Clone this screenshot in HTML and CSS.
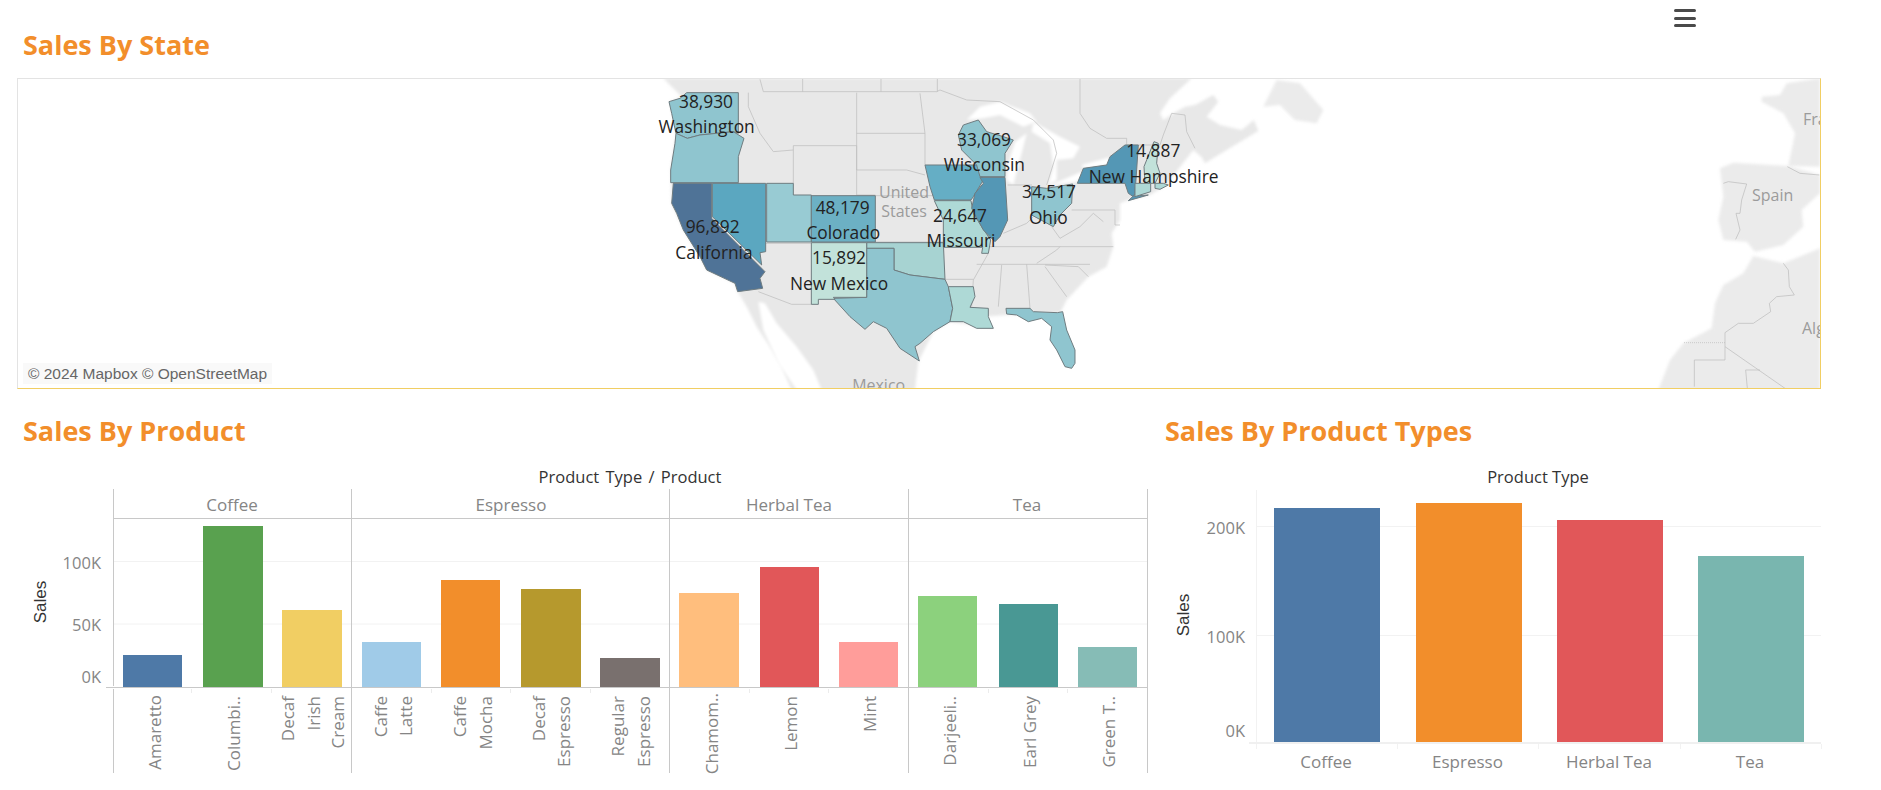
FILE: index.html
```html
<!DOCTYPE html>
<html lang="en">
<head>
<meta charset="utf-8">
<title>Sales Dashboard</title>
<link rel="stylesheet" href="styles.css">
</head>
<body>
<main class="dashboard">
  <header class="top">
    <h1 class="title">Sales By State</h1>
    <button class="menu" aria-label="Menu"><span></span><span></span><span></span></button>
  </header>

  <section class="map">
    <svg class="map-svg" viewBox="17 78 1804 311" width="1804" height="311">
      <g transform="translate(1400 0) scale(.33333)">
        <path class="land land-far" d="M1160,250L1260,235V500L1165,498L1185,400L1150,340L1085,305L1085,290L1140,285Z"/>
        <path class="land land-far" d="M960,505L1000,488L1165,498L1260,525V580L1205,630L1210,680L1150,735L1065,755L1040,725L970,720L955,660L970,590Z"/>
        <path class="land land-far" d="M1060,768L1150,790L1260,745V1170H775L810,1080L850,1030L935,985L945,910L970,855L1030,820Z"/>
        <path class="line" d="M970,550L985,545L1040,552L1025,600L1020,640L1008,640L1020,690L1007,718"/>
        <path class="line" d="M1162,500L1200,520L1258,525"/>
        <path class="line" d="M1150,790L1165,810L1168,860L1183,885L1130,890L1108,910L1112,935L1060,970L1015,970L975,998V1080H883V1160"/>
        <path class="line" d="M975,1040L1155,1165M1080,1110H1037L1042,1165"/>
        <path class="line dotted" d="M852,1028H975"/>
        <text class="place" x="1118" y="603" text-anchor="middle" font-size="48">Spain</text>
        <text class="place" x="1209" y="375" font-size="48">France</text>
        <text class="place" x="1206" y="1003" font-size="48">Algeria</text>
      </g>
      <g transform="translate(600 70) scale(.33333)">
        <path class="land" d="M130,25L190,25L215,50L245,80L210,95L228,190L212,300L215,400L250,480L300,560L320,600L405,640L413,665L440,710L470,770L510,830L545,890L575,960H945L955,875L1000,785L1050,755L1180,775L1150,740L1220,735L1380,730L1400,690L1465,620L1520,590L1540,530L1535,490L1560,450L1560,400L1585,390L1650,375L1700,345L1710,330L1780,240L1805,262L1815,280L1880,240L1975,183L1962,150L1925,180L1860,165L1820,140L1855,95L1840,75L1785,105L1755,110L1720,130L1690,150L1680,130L1710,85L1775,25Z"/>
        <path class="land land-far" d="M1990,110L2030,30L2100,40L2170,120L2150,160L2085,150L2040,105Z"/>
        <path class="water" d="M475,695L495,700L530,760L590,830L640,900L665,960H590L535,880L490,780Z"/>
        <path class="water" d="M1100,150L1140,110L1200,95L1290,130L1310,155L1270,170L1200,135L1150,145Z"/>
        <path class="water" d="M1245,215L1280,190L1265,250L1240,345L1220,330L1225,280Z"/>
        <path class="water" d="M1300,155L1380,200L1440,230L1420,265L1370,270L1370,330L1345,345L1360,290L1350,220L1295,185Z"/>
        <path class="water" d="M1345,345L1375,335L1445,305L1450,318L1430,335L1340,348Z"/>
        <path class="water" d="M1445,285L1530,262L1525,285L1450,295Z"/>
        <path class="line" d="M480,28L490,65H1010L1020,60L1100,90L1200,95L1300,150L1360,210L1370,250L1340,345"/>
        <path class="line" d="M1012,25V65M608,25V65M843,25V65M1440,25V130L1470,175L1520,205H1580V225H1680L1690,195L1715,130L1755,135L1760,185L1785,235"/>
        <path class="line" d="M445,68V110L480,190L520,245L580,240M580,227H770V375H826M580,227V340M770,68V300M770,190H975M770,300H920L975,315M960,70L975,190V285"/>
        <path class="line" d="M826,377H1000M497,520H634M634,703H575L475,665M826,516H1030"/>
        <path class="line" d="M1223,345H1296M1210,490L1280,460L1300,440M1170,530H1540M1310,580L1370,540L1380,530M1130,583H1470M1205,585L1195,710M1280,583L1290,715M1035,628H1120M1165,550L1120,630L1115,710M1335,585L1435,590L1465,620M1335,590L1400,680"/>
        <path class="line" d="M1415,420H1545V465H1560M1355,470L1380,505L1440,470L1480,430L1510,455"/>

        <path class="state s-mid" d="M260,68H415V190L400,185L300,195L262,205L228,190L215,130L207,95L240,85Z"/>
        <path class="state s-mid" d="M228,190L262,205L300,195L400,185L432,205L415,260V338H212V300L225,220Z"/>
        <path class="state s-dark" d="M220,340H335V445L495,605L480,625L488,655L413,665L405,640L320,600L300,560L250,480L230,430L215,400Z"/>
        <path class="state s-nevada" d="M337,340H497V545L480,548L485,585L337,440Z"/>
        <path class="state s-utah" d="M500,340H580V375H634V516H500Z"/>
        <path class="state s-colorado" d="M634,377H826V516H634Z"/>
        <path class="state s-oklahoma" d="M800,518H1030L1035,628L930,615L882,600V535H800Z"/>
        <path class="state s-mid" d="M800,535H882V600L930,615L1035,628L1045,650L1058,715L1050,755L1000,785L960,820L945,830L958,873L900,835L860,775L820,755L795,778L750,740L700,685L800,682Z"/>
        <path class="state s-light" d="M634,518H800V682H700L705,688H655V703H634Z"/>
        <path class="state s-pale" d="M1045,650H1120L1125,680L1110,712L1165,715V740L1180,775L1130,775L1090,755L1050,755L1058,715Z"/>
        <path class="state s-pale" d="M1003,392H1113L1120,430L1145,470L1172,510L1165,550H1145L1148,532H1030V450Z"/>
        <path class="state s-iowa" d="M975,285H1130L1150,330L1120,380L1113,390H1003L990,350Z"/>
        <path class="state s-deep" d="M1140,322H1215L1223,450L1200,500L1185,515L1150,480L1115,415L1125,370L1150,340Z"/>
        <path class="state s-mid" d="M1090,165L1135,150L1160,185L1210,200L1240,210L1215,250V320H1140L1130,285L1085,240L1075,195Z"/>
        <path class="state s-mid" d="M1295,350L1340,355L1418,342L1415,400L1380,435L1360,470L1295,435Z"/>
        <path class="state s-deep" d="M1432,340L1450,295L1520,285L1530,260L1575,225H1615L1610,300L1605,370L1600,380L1585,370L1575,340Z"/>
        <path class="state s-deep" d="M1585,392L1645,375L1600,378Z"/>
        <path class="state s-light" d="M1662,215L1675,220L1670,280L1680,310L1665,340H1635L1632,290Z"/>
        <path class="state s-pale" d="M1605,340H1652V365L1605,380Z"/>
        <path class="state s-pale" d="M1665,340H1690L1705,345L1680,358L1665,355Z"/>
        <path class="state s-mid" d="M1218,715H1290L1300,725L1372,728L1388,725L1400,780L1425,840V880L1415,895L1395,890L1370,840L1350,810L1355,770L1325,745L1285,755L1250,735L1220,732Z"/>

        <text class="place" x="912" y="383" text-anchor="middle" font-size="48">United</text>
        <text class="place" x="912" y="441" text-anchor="middle" font-size="48">States</text>
        <text class="place" x="836" y="962" text-anchor="middle" font-size="48">Mexico</text>

        <g class="labels">
          <text x="318" y="113">38,930</text><text x="320" y="190">Washington</text>
          <text x="338" y="489">96,892</text><text x="342" y="567">California</text>
          <text x="728" y="432">48,179</text><text x="730" y="508">Colorado</text>
          <text x="717" y="582">15,892</text><text x="717" y="660">New Mexico</text>
          <text x="1080" y="456">24,647</text><text x="1083" y="532">Missouri</text>
          <text x="1152" y="228">33,069</text><text x="1153" y="304">Wisconsin</text>
          <text x="1347" y="385">34,517</text><text x="1345" y="461">Ohio</text>
          <text x="1660" y="261">14,887</text><text x="1661" y="339">New Hampshire</text>
        </g>
      </g>
    </svg>
    <div class="attribution">© 2024 Mapbox © OpenStreetMap</div>
  </section>

  <div class="lower">
    <section class="panel panel-product">
      <h2 class="title">Sales By Product</h2>
      <svg class="chart" viewBox="0 470 1150 320" width="1150" height="320">
        <text class="axis-title spaced" x="630" y="483">Product Type / Product</text>
        <path class="grid" d="M113,561.5H1147M113,624H1147"/>
        <path class="frame" d="M113.5,489V686M351.5,489V773M669.5,489V773M908.5,489V773M1147.5,489V773M113,518.5H1147M113.5,689V773M106,687.5H1148"/>
        <path class="ticks" d="M191.5,689V693M271.5,689V693M431.5,689V693M510.5,689V693M590.5,689V693M749.5,689V693M828.5,689V693M988.5,689V693M1067.5,689V693"/>

        <text class="head" x="232" y="511">Coffee</text>
        <text class="head" x="511" y="511">Espresso</text>
        <text class="head" x="789" y="511">Herbal Tea</text>
        <text class="head" x="1027" y="511">Tea</text>

        <text class="val" x="101" y="569">100K</text>
        <text class="val" x="101" y="631">50K</text>
        <text class="val" x="101" y="683">0K</text>
        <text class="sales" transform="rotate(-90 40 602)" x="40" y="602">Sales</text>

        <rect class="c-blue" x="123" y="655" width="59" height="32"/>
        <rect class="c-green" x="203" y="526" width="60" height="161"/>
        <rect class="c-yellow" x="282" y="610" width="60" height="77"/>
        <rect class="c-sky" x="362" y="642" width="59" height="45"/>
        <rect class="c-orange" x="441" y="580" width="59" height="107"/>
        <rect class="c-olive" x="521" y="589" width="60" height="98"/>
        <rect class="c-grey" x="600" y="658" width="60" height="29"/>
        <rect class="c-peach" x="679" y="593" width="60" height="94"/>
        <rect class="c-red" x="760" y="567" width="59" height="120"/>
        <rect class="c-pink" x="839" y="642" width="59" height="45"/>
        <rect class="c-lime" x="918" y="596" width="59" height="91"/>
        <rect class="c-teal" x="999" y="604" width="59" height="83"/>
        <rect class="c-mint" x="1078" y="647" width="59" height="40"/>

        <g class="rot">
          <text transform="rotate(-90 154 695)" x="154" y="695">Amaretto</text>
          <text transform="rotate(-90 233.5 696)" x="233.5" y="696">Columbi..</text>
          <text transform="rotate(-90 287 696)" x="287" y="696">Decaf</text>
          <text transform="rotate(-90 313 696)" x="313" y="696">Irish</text>
          <text transform="rotate(-90 337.5 696)" x="337.5" y="696">Cream</text>
          <text transform="rotate(-90 380 696)" x="380" y="696">Caffe</text>
          <text transform="rotate(-90 405.7 696)" x="405.7" y="696">Latte</text>
          <text transform="rotate(-90 459 696)" x="459" y="696">Caffe</text>
          <text transform="rotate(-90 485 696)" x="485" y="696">Mocha</text>
          <text transform="rotate(-90 538.5 696)" x="538.5" y="696">Decaf</text>
          <text transform="rotate(-90 563.7 696)" x="563.7" y="696">Espresso</text>
          <text transform="rotate(-90 617 696)" x="617" y="696">Regular</text>
          <text transform="rotate(-90 643 696)" x="643" y="696">Espresso</text>
          <text transform="rotate(-90 711 693)" x="711" y="693">Chamom..</text>
          <text transform="rotate(-90 790 696)" x="790" y="696">Lemon</text>
          <text transform="rotate(-90 869 696)" x="869" y="696">Mint</text>
          <text transform="rotate(-90 949 696)" x="949" y="696">Darjeeli..</text>
          <text transform="rotate(-90 1029 696)" x="1029" y="696">Earl Grey</text>
          <text transform="rotate(-90 1108 696)" x="1108" y="696">Green T..</text>
        </g>
      </svg>
    </section>

    <section class="panel panel-types">
      <h2 class="title">Sales By Product Types</h2>
      <svg class="chart" viewBox="1150 470 731 320" width="731" height="320">
        <text class="axis-title" x="1538" y="483">Product Type</text>
        <path class="grid" d="M1256,526.5H1821M1256,635.5H1821M1256.5,490V742"/>
        <path class="baseline" d="M1249,743H1821"/>
        <path class="grid" d="M1256.5,744V749M1397.5,744V749M1538.5,744V749M1680.5,744V749M1821.5,744V749"/>
        <text class="val" x="1245" y="534">200K</text>
        <text class="val" x="1245" y="643">100K</text>
        <text class="val" x="1245" y="737">0K</text>
        <text class="sales" transform="rotate(-90 1183.5 615)" x="1183.5" y="615">Sales</text>
        <rect class="c-blue" x="1274" y="508" width="106" height="234"/>
        <rect class="c-orange" x="1416" y="503" width="106" height="239"/>
        <rect class="c-red" x="1557" y="520" width="106" height="222"/>
        <rect class="c-aqua" x="1698" y="556" width="106" height="186"/>
        <text class="head" x="1326" y="768">Coffee</text>
        <text class="head" x="1467.5" y="768">Espresso</text>
        <text class="head" x="1609" y="768">Herbal Tea</text>
        <text class="head" x="1750" y="768">Tea</text>
      </svg>
    </section>
  </div>
</main>
</body>
</html>
```
FILE: styles.css
```css
html, body {
  margin: 0;
  padding: 0;
  background: #fff;
}

.dashboard {
  width: 1881px;
  height: 790px;
  overflow: hidden;
  font-family: "Open Sans", sans-serif;
}

.top {
  height: 78px;
  position: relative;
  padding-left: 23px;
  box-sizing: border-box;
  padding-top: 27px;
}

.title {
  margin: 0;
  font-family: "Open Sans", sans-serif;
  font-size: 27px;
  font-weight: 700;
  line-height: 36px;
  color: #f28e2b;
}

.menu {
  position: absolute;
  left: 1674px;
  top: 9px;
  width: 22px;
  height: 18px;
  padding: 0;
  border: 0;
  background: none;
  display: flex;
  flex-direction: column;
  justify-content: space-between;
}

.menu span {
  display: block;
  height: 3px;
  border-radius: 1.5px;
  background: #4a4a4a;
}

.map {
  position: relative;
  width: 1804px;
  height: 311px;
  margin-left: 17px;
  box-sizing: border-box;
  overflow: hidden;
  border-top: 1px solid #e3e3e3;
  border-left: 1px solid #e3e3e3;
  border-right: 1px solid #f1ce63;
  border-bottom: 1px solid #f1ce63;
}

.map-svg {
  display: block;
  margin: -1px 0 0 -1px;
}

.land {
  fill: #e8e8e8;
  filter: blur(4px);
}

.land-far { fill: #ebebeb; }

.water {
  fill: #fff;
  filter: blur(4px);
}

.line {
  fill: none;
  stroke: #bdbdbd;
  stroke-width: 2.2;
}

.dotted { stroke-dasharray: 3 3; }

.state {
  stroke: #6e7b80;
  stroke-width: 3;
  stroke-linejoin: round;
}

.s-dark { fill: #4f7397; }
.s-deep { fill: #5497b5; }
.s-nevada { fill: #5ba7c0; }
.s-iowa { fill: #65aec5; }
.s-colorado { fill: #6cb0c4; }
.s-mid { fill: #8fc5cf; }
.s-utah { fill: #98cbd3; }
.s-oklahoma { fill: #a7d3d2; }
.s-pale { fill: #aed9d6; }
.s-light { fill: #c2e2da; }

.place {
  fill: #9b9b9b;
  font-family: "Open Sans", sans-serif;
}

.labels text {
  fill: #222;
  font-family: "Open Sans", sans-serif;
  font-size: 52px;
  text-anchor: middle;
}

.attribution {
  position: absolute;
  left: 5px;
  top: 284px;
  height: 21px;
  padding: 0 5px;
  line-height: 21px;
  background: #f9f9f9;
  color: #666;
  font-family: "Liberation Sans", sans-serif;
  font-size: 15.5px;
  white-space: nowrap;
}

.lower {
  display: flex;
}

.panel {
  height: 401px;
  box-sizing: border-box;
  padding-top: 24px;
}

.panel-product {
  width: 1150px;
}

.panel-product .title { padding-left: 23px; }

.panel-types {
  width: 731px;
}

.panel-types .title { padding-left: 15px; }

.chart {
  display: block;
  margin-top: 21px;
}

.axis-title {
  fill: #333;
  font-size: 16.5px;
  text-anchor: middle;
}

.spaced { word-spacing: 2px; }

.head {
  fill: #858585;
  font-size: 17px;
  text-anchor: middle;
}

.val {
  fill: #858585;
  font-size: 16.5px;
  text-anchor: end;
}

.sales {
  fill: #333;
  font-family: "Liberation Sans", sans-serif;
  font-size: 17px;
  text-anchor: middle;
  dominant-baseline: central;
}

.rot text {
  fill: #858585;
  font-size: 17px;
  text-anchor: end;
  dominant-baseline: central;
}

.grid {
  fill: none;
  stroke: #f2f2f2;
  stroke-width: 1;
}

.baseline {
  fill: none;
  stroke: #f0f0f0;
  stroke-width: 2;
}

.frame {
  fill: none;
  stroke: #c8c8c8;
  stroke-width: 1;
}

.ticks {
  fill: none;
  stroke: #ececec;
  stroke-width: 1;
}

.c-blue { fill: #4e79a7; }
.c-green { fill: #59a14f; }
.c-yellow { fill: #f1ce63; }
.c-sky { fill: #a0cbe8; }
.c-orange { fill: #f28e2b; }
.c-olive { fill: #b6992d; }
.c-grey { fill: #79706e; }
.c-peach { fill: #ffbe7d; }
.c-red { fill: #e15759; }
.c-pink { fill: #ff9d9a; }
.c-lime { fill: #8cd17d; }
.c-teal { fill: #499894; }
.c-mint { fill: #86bcb6; }
.c-aqua { fill: #79b6af; }
```
